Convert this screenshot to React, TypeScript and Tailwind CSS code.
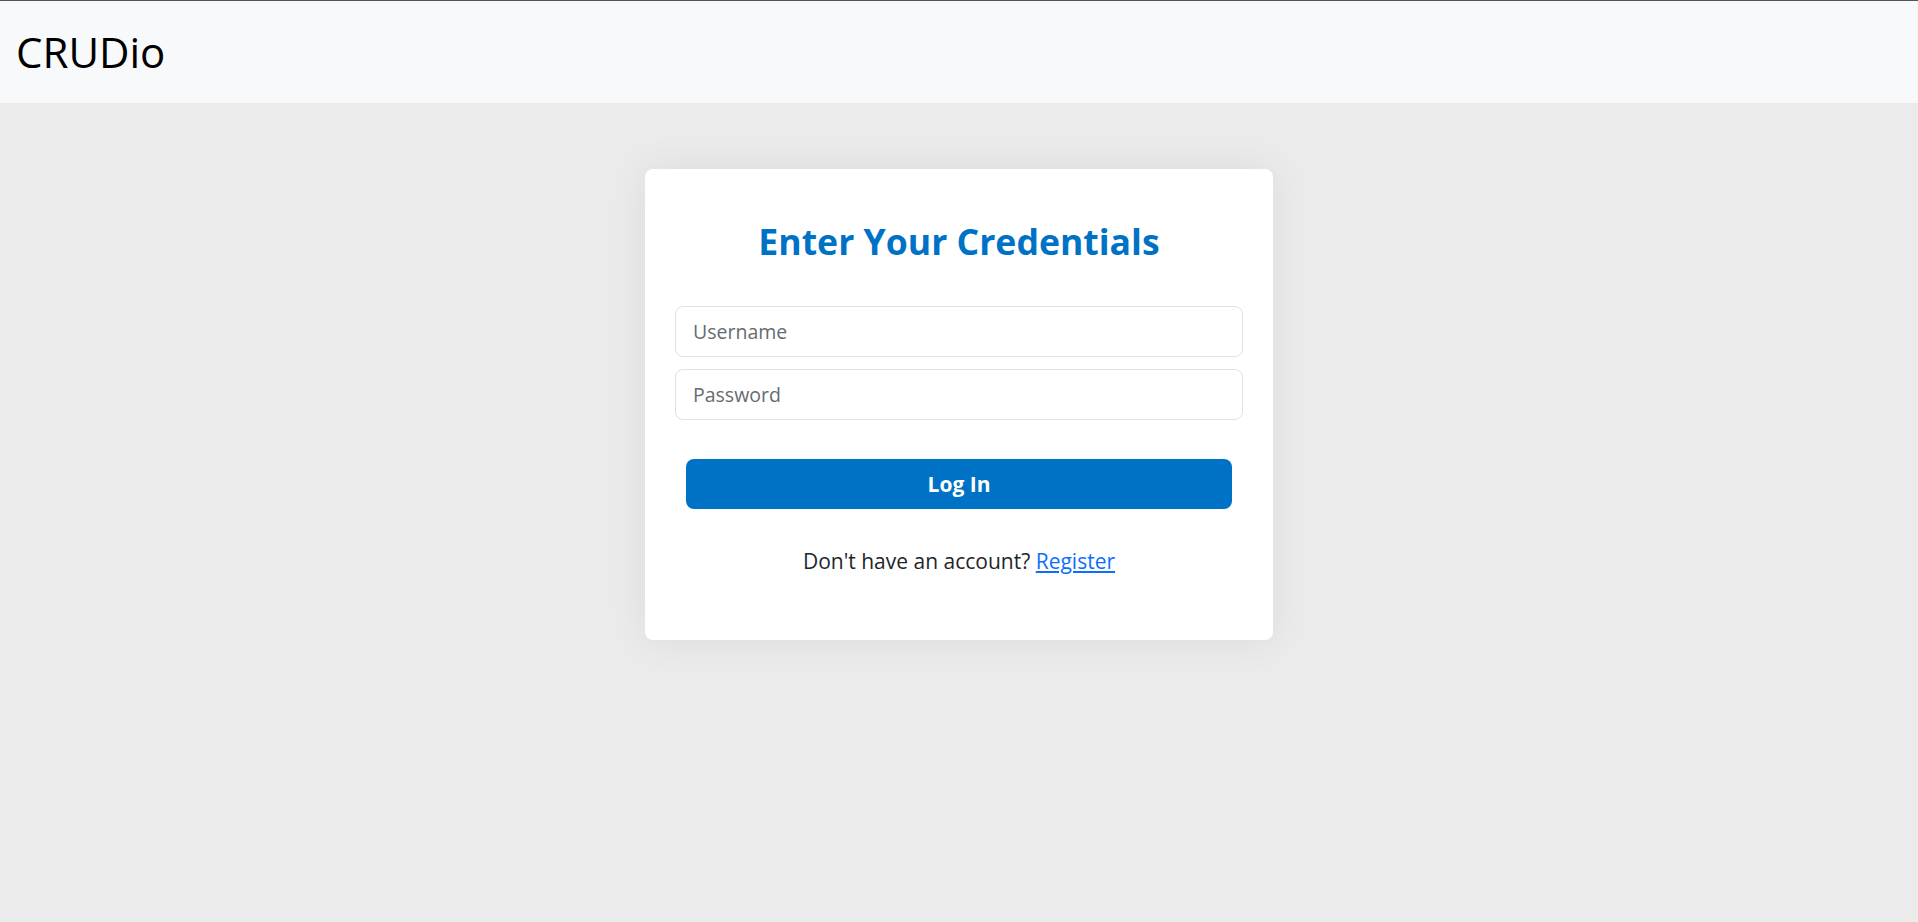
import { useState } from "react";

export default function App() {
  const [username, setUsername] = useState("");
  const [password, setPassword] = useState("");

  return (
    <div className="min-h-screen w-full bg-[#ebebeb] font-['Open_Sans',sans-serif] text-[#212529]">
      <nav className="flex h-[103px] items-center border-t border-[#555] bg-[#f8f9fa] px-4">
        <span className="text-[42px] leading-none text-black">CRUDio</span>
      </nav>

      <div className="flex justify-center pt-[66px]">
        <div className="w-[628px] rounded-lg bg-white px-[30px] pt-[49px] pb-[64px] shadow-[0_0_40px_rgba(0,0,0,0.07)]">
          <h2 className="text-center text-[35.6px] font-bold leading-[46px] text-[#0072c6]">
            Enter Your Credentials
          </h2>

          <form className="mt-[42px]" onSubmit={(e) => e.preventDefault()}>
            <input
              type="text"
              placeholder="Username"
              value={username}
              onChange={(e) => setUsername(e.target.value)}
              className="block h-[51px] w-full rounded-lg border border-[#dee2e6] px-[17px] text-[19.5px] text-[#212529] outline-none placeholder:text-[#666b70]"
            />
            <input
              type="password"
              placeholder="Password"
              value={password}
              onChange={(e) => setPassword(e.target.value)}
              className="mt-3 block h-[51px] w-full rounded-lg border border-[#dee2e6] px-[17px] text-[19.5px] text-[#212529] outline-none placeholder:text-[#666b70]"
            />
            <div className="px-[11px] pt-[39px]">
              <button
                type="submit"
                className="h-[50px] w-full rounded-lg bg-[#0072c6] pt-[2px] text-[21px] font-bold text-white"
              >
                Log In
              </button>
            </div>
          </form>

          <p className="mt-[37px] text-center text-[21px] leading-[30px]">
            Don't have an account?{" "}
            <a href="#" className="text-[#0d6efd] underline">
              Register
            </a>
          </p>
        </div>
      </div>
    </div>
  );
}
